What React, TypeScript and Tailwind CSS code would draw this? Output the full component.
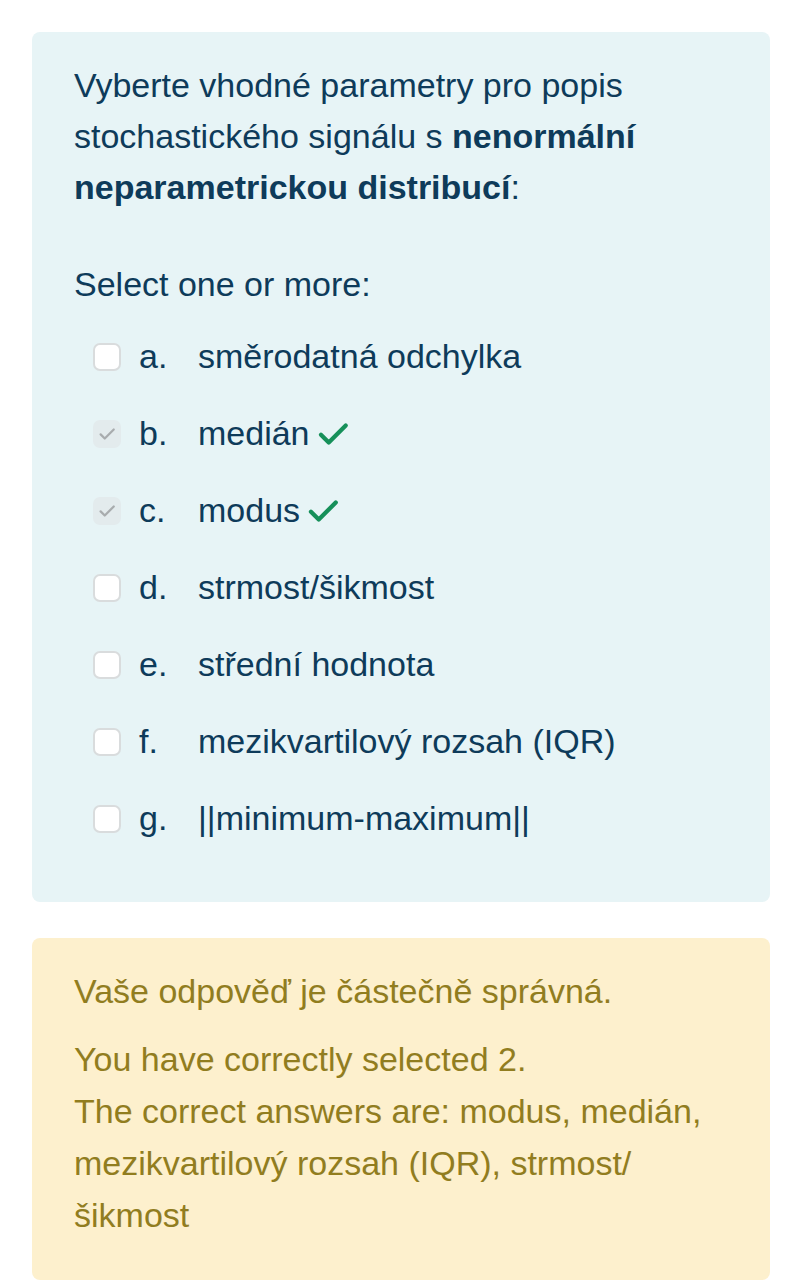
const options = [
  { letter: 'a.', text: 'směrodatná odchylka', checked: false },
  { letter: 'b.', text: 'medián', checked: true },
  { letter: 'c.', text: 'modus', checked: true },
  { letter: 'd.', text: 'strmost/šikmost', checked: false },
  { letter: 'e.', text: 'střední hodnota', checked: false },
  { letter: 'f.', text: 'mezikvartilový rozsah (IQR)', checked: false },
  { letter: 'g.', text: '||minimum-maximum||', checked: false },
];

function Tick({ className }: { className: string }) {
  return (
    <svg viewBox="0 0 24 24" fill="none" className={className}>
      <path d="M3.5 12.5l5.5 5.5L21 6" stroke="currentColor" strokeWidth="3" strokeLinecap="round" strokeLinejoin="round" />
    </svg>
  );
}

function App() {
  return (
    <div className="min-h-screen bg-white pl-8 pr-[23px] pt-8 font-['Liberation_Sans',Arial,sans-serif] text-[34px]">
      {/* otázka */}
      <div className="rounded-lg bg-[#e7f4f6] px-[42px] pt-[28px] pb-[45px] text-[#0e3b5a]">
        <p className="leading-[51px]">
          Vyberte vhodné parametry pro popis stochastického signálu s{' '}
          <b>nenormální neparametrickou distribucí</b>:
        </p>
        <p className="mt-[46px] leading-[51px]">Select one or more:</p>
        <div className="mt-[8px] flex flex-col">
          {options.map((o) => (
            <div key={o.letter} className="flex h-[77px] items-center pl-[19px]">
              {o.checked ? (
                <div className="flex h-[28px] w-[28px] shrink-0 items-center justify-center rounded-[7px] bg-[#e3ebed]">
                  <Tick className="h-[18px] w-[18px] text-[#a8acae]" />
                </div>
              ) : (
                <div className="h-[28px] w-[28px] shrink-0 rounded-[7px] border-2 border-[#d9dcdd] bg-white" />
              )}
              <span className="ml-[18px] w-[59px] shrink-0">{o.letter}</span>
              <span className="whitespace-nowrap">{o.text}</span>
              {o.checked && <Tick className="ml-[3px] h-[34px] w-[40px] text-[#16905a]" />}
            </div>
          ))}
        </div>
      </div>

      {/* zpětná vazba */}
      <div className="mt-9 rounded-lg bg-[#fdf0cd] px-[42px] pt-[28px] pb-[39px] text-[#917d1f]">
        <p className="leading-[51px]">Vaše odpověď je částečně správná.</p>
        <p className="mt-[16px] leading-[52px]">
          You have correctly selected 2.
          <br />
          The correct answers are: modus, medián, mezikvartilový rozsah (IQR), strmost/ šikmost
        </p>
      </div>
    </div>
  );
}

export default App;
